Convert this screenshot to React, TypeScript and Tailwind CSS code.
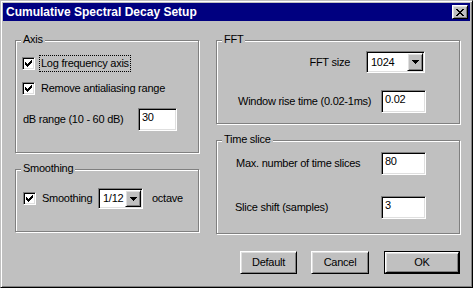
import React from 'react';

const raised =
  'border border-t-white border-l-white border-r-black border-b-black shadow-[inset_1px_1px_0_#dfdfdf,inset_-1px_-1px_0_#808080]';
const sunken =
  'border border-t-[#808080] border-l-[#808080] border-r-white border-b-white shadow-[inset_1px_1px_0_#000,inset_-1px_-1px_0_#dfdfdf]';

const Pixels: React.FC<{ rows: string[]; className?: string }> = ({ rows, className }) => (
  <svg
    width={rows[0].length}
    height={rows.length}
    viewBox={`0 0 ${rows[0].length} ${rows.length}`}
    shapeRendering="crispEdges"
    className={className}
  >
    {rows.map((row, y) =>
      row.split('').map((c, x) => (c === 'X' ? <rect key={`${x}-${y}`} x={x} y={y} width={1} height={1} fill="#000" /> : null))
    )}
  </svg>
);

const checkRows = ['......X', '.....XX', 'X...XXX', 'XX.XXX.', 'XXXXX..', '.XXX...', '..X....'];
const closeRows = ['XX....XX', '.XX..XX.', '..XXXX..', '...XX...', '..XXXX..', '.XX..XX.', 'XX....XX'];
const arrowRows = ['XXXXXXX', '.XXXXX.', '..XXX..', '...X...'];

const Checkbox: React.FC = () => (
  <div className={`w-[13px] h-[13px] bg-white flex items-center justify-center shrink-0 ${sunken}`}>
    <Pixels rows={checkRows} />
  </div>
);

const Field: React.FC<{ value: string; w: string }> = ({ value, w }) => (
  <div className={`${w} h-[23px] bg-white pl-[3px] pt-[2px] leading-[13px] shrink-0 ${sunken}`}>{value}</div>
);

const Combo: React.FC<{ value: string; w: string; h: string }> = ({ value, w, h }) => (
  <div className={`${w} ${h} bg-white p-[1px] flex shrink-0 ${sunken}`}>
    <div className="flex-1 pl-[3px] flex items-center overflow-hidden whitespace-nowrap">{value}</div>
    <div className={`w-[16px] h-full bg-[#c0c0c0] flex items-center justify-center ${raised}`}>
      <Pixels rows={arrowRows} />
    </div>
  </div>
);

const Group: React.FC<{ label: string; className: string; children: React.ReactNode }> = ({ label, className, children }) => (
  <div className={`relative border border-[#808080] shadow-[inset_1px_1px_0_#fff,1px_1px_0_#fff] ${className}`}>
    <span className="absolute top-[-8px] left-[5px] px-[2px] bg-[#c0c0c0] leading-[13px]">{label}</span>
    {children}
  </div>
);

const Button: React.FC<{ label: string; w: string; primary?: boolean }> = ({ label, w, primary }) =>
  primary ? (
    <div className={`${w} h-[23px] border border-black`}>
      <div className={`w-full h-full flex items-center justify-center ${raised}`}>{label}</div>
    </div>
  ) : (
    <div className={`${w} h-[23px] flex items-center justify-center ${raised}`}>{label}</div>
  );

export default function App() {
  return (
    <div
      className="w-[473px] h-[288px] bg-[#c0c0c0] text-black text-[11px] leading-[13px] tracking-[-0.25px] p-[2px] border border-t-[#c0c0c0] border-l-[#c0c0c0] border-r-black border-b-black shadow-[inset_1px_1px_0_#fff,inset_-1px_-1px_0_#808080]"
      style={{ fontFamily: '"Liberation Sans", Arial, sans-serif' }}
    >
      {/* title bar */}
      <div className="h-[18px] bg-[#000080] flex items-center pl-[3px] pr-[2px]">
        <span className="text-white font-bold text-[12px] tracking-normal flex-1">Cumulative Spectral Decay Setup</span>
        <div className={`w-[16px] h-[14px] bg-[#c0c0c0] flex items-center justify-center ${raised}`}>
          <Pixels rows={closeRows} />
        </div>
      </div>

      <div className="flex pl-[12px] pt-[19px] gap-[17px]">
        {/* left column */}
        <div className="w-[184px] flex flex-col">
          <Group label="Axis" className="h-[113px]">
            <div className="flex flex-col pl-[6px] pt-[16px]">
              <div className="flex items-center h-[13px]">
                <Checkbox />
                <span className="ml-[4px] px-[1px] border border-dotted border-black leading-[15px]">Log frequency axis</span>
              </div>
              <div className="flex items-center h-[13px] mt-[12px]">
                <Checkbox />
                <span className="ml-[4px] px-[1px] border border-transparent">Remove antialiasing range</span>
              </div>
              <div className="flex items-center mt-[13px]">
                <span className="w-[116px] pl-[1px]">dB range (10 - 60 dB)</span>
                <Field value="30" w="w-[39px]" />
              </div>
            </div>
          </Group>

          <Group label="Smoothing" className="h-[63px] mt-[16px]">
            <div className="flex items-center pl-[7px] pt-[18px]">
              <Checkbox />
              <span className="ml-[4px] px-[1px] w-[58px] border border-transparent">Smoothing</span>
              <Combo value="1/12" w="w-[45px]" h="h-[21px]" />
              <span className="ml-[9px]">octave</span>
            </div>
          </Group>
        </div>

        {/* right column */}
        <div className="w-[244px] flex flex-col">
          <Group label="FFT" className="h-[84px]">
            <div className="flex justify-end items-center gap-[16px] pr-[34px] mt-[10px]">
              <span>FFT size</span>
              <Combo value="1024" w="w-[59px]" h="h-[22px]" />
            </div>
            <div className="flex justify-between items-center pl-[21px] pr-[33px] mt-[17px]">
              <span>Window rise time (0.02-1ms)</span>
              <Field value="0.02" w="w-[45px]" />
            </div>
          </Group>

          <Group label="Time slice" className="h-[94px] mt-[16px]">
            <div className="flex justify-between items-center pl-[19px] pr-[33px] mt-[11px]">
              <span>Max. number of time slices</span>
              <Field value="80" w="w-[45px]" />
            </div>
            <div className="flex justify-between items-center pl-[18px] pr-[33px] mt-[21px]">
              <span>Slice shift (samples)</span>
              <Field value="3" w="w-[45px]" />
            </div>
          </Group>

          <div className="flex justify-end mt-[17px]">
            <Button label="Default" w="w-[57px]" />
            <Button label="Cancel" w="w-[58px] ml-[14px]" />
            <Button label="OK" w="w-[76px] ml-[15px]" primary />
          </div>
        </div>
      </div>
    </div>
  );
}
